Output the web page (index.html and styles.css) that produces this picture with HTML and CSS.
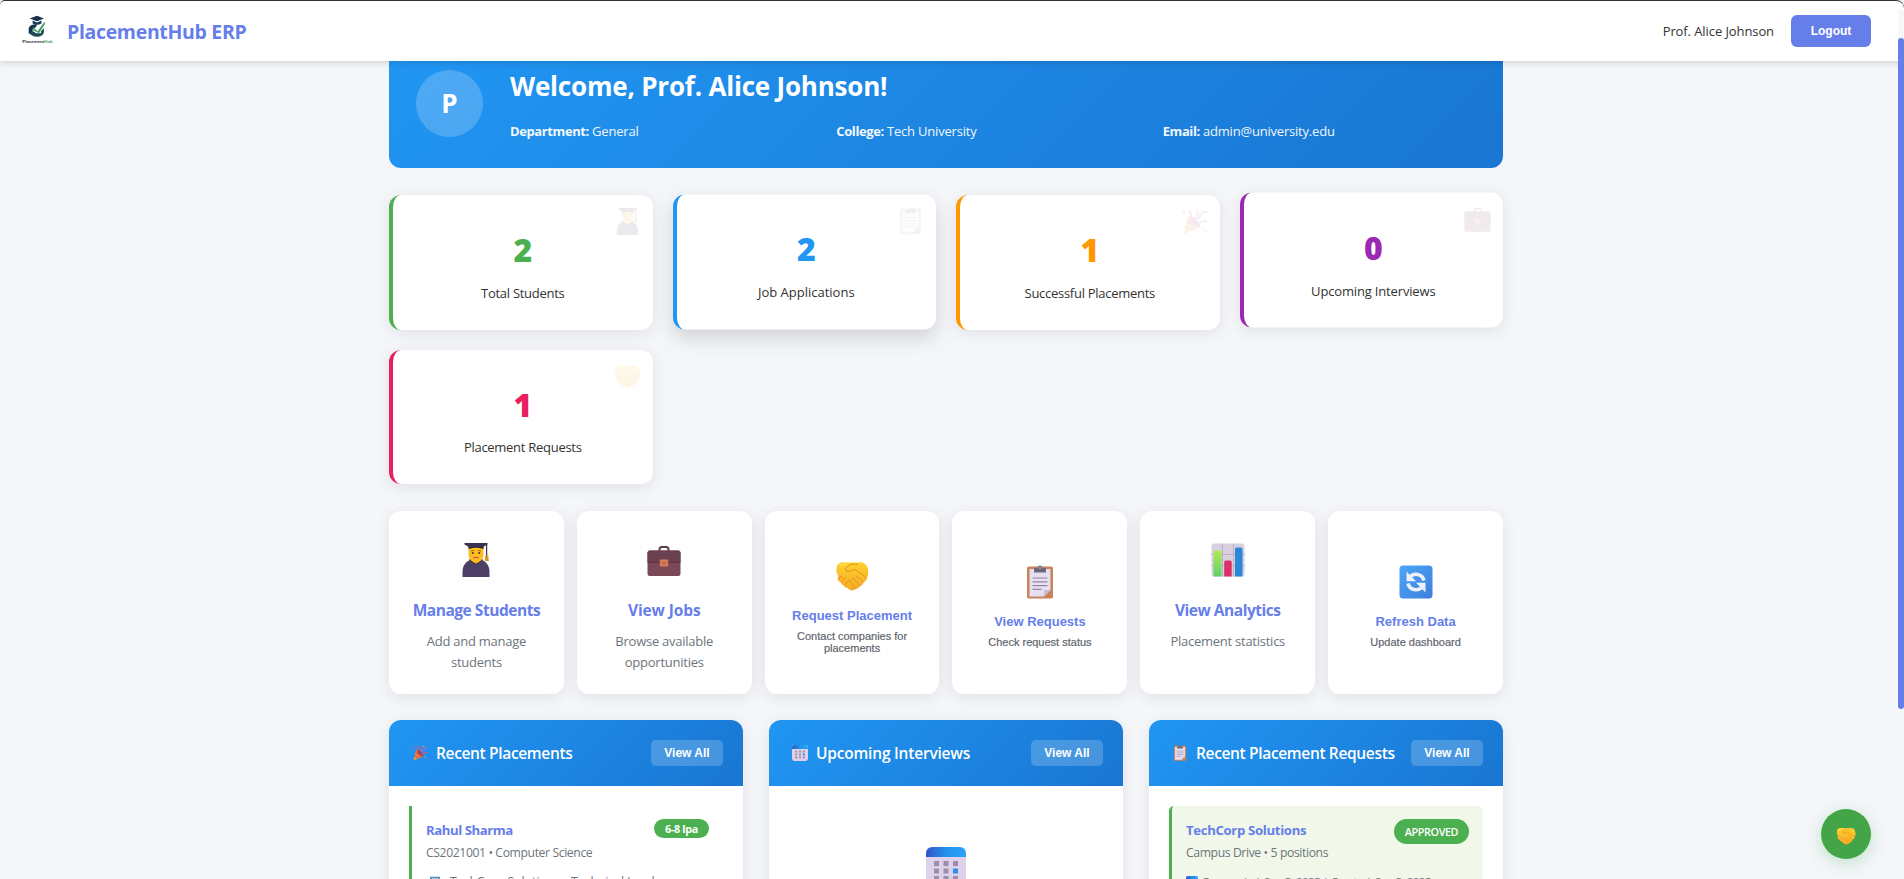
FILE: index.html
```html
<!DOCTYPE html>
<html lang="en">
<head>
<meta charset="utf-8">
<title>PlacementHub ERP</title>
<link rel="stylesheet" href="styles.css">
</head>
<body>
<svg class="defs" aria-hidden="true">
  <defs>
    <linearGradient id="gold" x1="0" y1="0" x2="0" y2="1"><stop offset="0" stop-color="#ffd02e"/><stop offset="1" stop-color="#f7a928"/></linearGradient>
    <linearGradient id="sky" x1="0" y1="0" x2="1" y2="1"><stop offset="0" stop-color="#4aa6f5"/><stop offset="1" stop-color="#3f7fdc"/></linearGradient>
    <linearGradient id="cap" x1="0" y1="0" x2="1" y2="0"><stop offset="0" stop-color="#2f55c8"/><stop offset=".5" stop-color="#2490ee"/><stop offset="1" stop-color="#2aa4fa"/></linearGradient>
    <linearGradient id="lime" x1="0" y1="0" x2="0" y2="1"><stop offset="0" stop-color="#b5ea52"/><stop offset="1" stop-color="#5ccf6a"/></linearGradient>
    <symbol id="grad" viewBox="0 0 34 34">
      <path d="M3.500 34v-5c0-7 4-11 9-12.500h9c5 1.500 9 5.500 9 12.500v5z" fill="#4c3f66"/>
      <path d="M10 17l7 5 7-5-2-2H12z" fill="#2e2740"/>
      <path d="M14 14h6v5l-3 2-3-2z" fill="#e79a1e"/>
      <path d="M9.500 4h15v7c0 5-3.500 8.500-7.500 8.500S9.500 16 9.500 11z" fill="#fbbd20"/>
      <circle cx="13.800" cy="10" r="1" fill="#4b3630"/><circle cx="20.200" cy="10" r="1" fill="#4b3630"/>
      <path d="M12 8l3-.6M22 8l-3-.6" stroke="#8a5a1c" stroke-width=".8"/>
      <path d="M14.500 15q2.500-1.500 5 0" stroke="#c63a50" stroke-width="1.200" fill="none"/>
      <path d="M9.500 2h15v4q-7.500-2.500-15 0z" fill="#2a2438"/>
      <path d="M5.500 0h23v1.500L24 4H10L5.500 1.500z" fill="#3a3250"/>
      <path d="M27.600 1v12" stroke="#3a3250" stroke-width="1.200"/>
      <path d="M26.200 12.500h3l.6 5.500h-4z" fill="#d7962c"/>
    </symbol>
    <symbol id="case" viewBox="0 0 34 34">
      <path d="M12.500 8V6.500Q12.500 4 15 4h4q2.500 0 2.500 2.500V8" fill="none" stroke="#5a3c46" stroke-width="2"/>
      <rect x="0.500" y="7.500" width="33" height="25.500" rx="2.200" fill="#7b4858"/>
      <path d="M.5 19V10q0-2.500 2.500-2.500h28q2.500 0 2.500 2.500v9z" fill="#6c414f"/>
      <path d="M.5 19.200h33" stroke="#54313e"/>
      <rect x="12.800" y="16.500" width="8.400" height="7" rx="1" fill="#d87a5c"/><rect x="14.600" y="18.300" width="4.800" height="3.400" fill="#c96e52"/>
    </symbol>
    <symbol id="shake" viewBox="0 0 34 34">
      <path d="M6 3.500Q9 3 11.500 3.600h11Q26 2.800 29 4q4 3 4.300 8 .2 4-1.300 6.500 0 3-3.500 5-1 3-3.500 3.800-1.500 2.700-4.500 3-2 1.500-5 1-1.500-1-3-2.300-2.500 0-3.500-2.500-2.500-.5-3-3-3.500-1-3.500-4.500.8-1.500.5-3Q.5 12.500 1.500 9C2.200 6 3.500 4 6 3.500z" fill="url(#gold)"/>
      <path d="M23 5.500l-7-.5-5.500 4.500q0 3.500 3.500 3l6-2 9.500 6.500q1.500 2.500 2 1.500" fill="none" stroke="#dc931c" stroke-width="1"/>
      <path d="M20.500 16.500l8 6.500M17.500 18.500l7.500 8M14.500 20.500l5.500 9" stroke="#e2951f" stroke-width="1" fill="none"/>
      <path d="M3.500 20l3.500-3.500M6 23.500l5-5.500M9.500 26.500l4.500-5.500" stroke="#ee9226" stroke-width="1.100"/>
      <path d="M4.500 7Q8 4.700 12 5.500" stroke="#ffe15c" fill="none" stroke-width="1.500"/>
    </symbol>
    <symbol id="clip" viewBox="0 0 34 34">
      <rect x="4" y="1.500" width="26" height="32" rx="1.800" fill="#c9825a"/>
      <path d="M6.500 4h21v21l-6.500 6.500H6.500z" fill="#e6dff0"/>
      <path d="M21 31.500V25h6.500z" fill="#c9bbd6"/>
      <path d="M9.500 13h15M9.500 16.800h15M9.500 20.600h15M9.500 24.400h9" stroke="#9288a2" stroke-width="1.200"/>
      <path d="M11 7.500V4.200q0-1.200 1.500-1.200h2Q15 .5 17 .5T19.500 3h2Q23 3 23 4.200v3.300z" fill="#6c6878"/><circle cx="17" cy="3" r=".9" fill="#b9b3c4"/>
    </symbol>
    <symbol id="chart" viewBox="0 0 34 34">
      <rect x=".5" y=".5" width="33" height="33" rx="3" fill="#d8cfdf"/>
      <path d="M.5 11.500h33M.5 22.500h33M11.500.5v33M22.500.5v33" stroke="#b5a8bf" stroke-width=".8"/>
      <path d="M2.500 9q0-1.500 1.500-1.500h5q1.500 0 1.500 1.500v24.500h-8z" fill="url(#lime)"/>
      <path d="M13.200 19q0-1.500 1.500-1.500h4.500q1.500 0 1.500 1.500v14.500h-7.500z" fill="#dc2f68"/>
      <path d="M24 6q0-1.500 1.500-1.500h4.500q1.500 0 1.500 1.500v27.500H24z" fill="#2b87d8"/>
    </symbol>
    <symbol id="refresh" viewBox="0 0 34 34">
      <rect x=".5" y=".5" width="33" height="33" rx="3.500" fill="url(#sky)"/>
      <path d="M10.500 12.500A8.200 8.200 0 0 1 25 15.500" fill="none" stroke="#eef0fc" stroke-width="3.600"/>
      <path d="M7.500 6.500v9.800h9.500z" fill="#eef0fc"/>
      <path d="M23.500 21.500A8.200 8.200 0 0 1 9 18.500" fill="none" stroke="#eef0fc" stroke-width="3.600"/>
      <path d="M26.500 27.500v-9.800H17z" fill="#eef0fc"/>
    </symbol>
    <symbol id="party" viewBox="0 0 34 34">
      <path d="M3 33L9 10l15 14z" fill="#f09a3c"/>
      <path d="M6 23l9 5M8 16l12 10" stroke="#dd4f55" stroke-width="3"/>
      <ellipse cx="17" cy="17" rx="3.200" ry="9.500" transform="rotate(-46 17 17)" fill="#a0405a"/>
      <path d="M12 13Q14 7 10 2M18 14q5-4 2-11M21 20q5-5 12-3" fill="none" stroke="#e5547b" stroke-width="2.400"/>
      <path d="M19 13q5 1 6-4t8-4" fill="none" stroke="#9566e0" stroke-width="2.400"/>
      <circle cx="4" cy="6" r="1.800" fill="#e5547b"/><circle cx="28" cy="25" r="1.700" fill="#6fb8f2"/><circle cx="25" cy="3" r="1.500" fill="#f3c33b"/><circle cx="31" cy="29" r="1.400" fill="#e5547b"/>
    </symbol>
    <symbol id="cal" viewBox="0 0 40 40">
      <rect width="40" height="40" rx="6" fill="#ded2ea"/>
      <path d="M0 10V7q0-7 7-7h26q7 0 7 7v3z" fill="url(#cap)"/>
      <g fill="#9d8fac"><path d="M8 14h5v5H8zM17.500 14h5v5h-5zM27 14h5v5h-5zM8 21.500h5v5H8zM17.500 21.500h5v5h-5zM8 29h5v5H8zM17.500 29h5v5h-5zM27 29h5v5h-5z"/></g>
      <path d="M27 21.500h5v5h-5z" fill="#2e90ea"/>
    </symbol>
    <symbol id="office" viewBox="0 0 34 34">
      <path d="M3 2h28v31H3z" fill="#5b8fb8"/><path d="M9 6h4v4H9zM15 6h4v4h-4zM21 6h4v4h-4z" fill="#c8e3f7"/>
    </symbol>
  </defs>
</svg>
<header class="topbar">
  <div class="brand">
    <svg class="logo" viewBox="0 0 32 32">
      <g transform="translate(2.100 .6) scale(.87)">
        <path d="M8.500 5L16 2.200 23 5l-7 2.800z" fill="#16304c"/>
        <path d="M11.500 7v3q4.500 2.500 9 0V7L16 9z" fill="#1c3b58"/>
        <path d="M16 10.500Q8 11 7.500 15v5.500h4V16l3.500-2.500z" fill="#14324d"/>
        <path d="M8 19q2 4.500 8 4.500t7-4.500v-4l-3 3v2h-5l-3-2z" fill="#1d4a55"/>
        <path d="M12 13.500l4.500 4.500 7-9.500.8 1.800L18 20l-6-3z" fill="#3fa35f"/>
      </g>
      <text x="16.500" y="26.300" class="logo-text" text-anchor="middle"><tspan fill="#1b2f4a">Placement</tspan><tspan fill="#48a060">Hub</tspan></text>
    </svg>
    <span class="brand-name">PlacementHub ERP</span>
  </div>
  <div class="account"><span class="user">Prof. Alice Johnson</span><button class="logout">Logout</button></div>
</header>
<div class="scrollbar"><div class="thumb"></div></div>
<main class="page">
  <section class="banner">
    <div class="avatar">P</div>
    <div class="intro">
      <h1>Welcome, Prof. Alice Johnson!</h1>
      <div class="facts">
        <div class="fact"><b>Department:</b> General</div>
        <div class="fact"><b>College:</b> Tech University</div>
        <div class="fact"><b>Email:</b> admin@university.edu</div>
      </div>
    </div>
  </section>

  <section class="stats">
    <div class="stat green"><svg class="ghost"><use href="#grad"/></svg><div class="num">2</div><div class="label">Total Students</div></div>
    <div class="stat blue"><svg class="ghost"><use href="#clip"/></svg><div class="num">2</div><div class="label">Job Applications</div></div>
    <div class="stat orange"><svg class="ghost"><use href="#party"/></svg><div class="num">1</div><div class="label">Successful Placements</div></div>
    <div class="stat purple"><svg class="ghost"><use href="#case"/></svg><div class="num">0</div><div class="label">Upcoming Interviews</div></div>
    <div class="stat pink"><svg class="ghost"><use href="#shake"/></svg><div class="num">1</div><div class="label">Placement Requests</div></div>
  </section>

  <section class="actions">
    <a class="action link"><svg class="icon"><use href="#grad"/></svg><h3>Manage Students</h3><p>Add and manage<br>students</p></a>
    <a class="action link jobs"><svg class="icon"><use href="#case"/></svg><h3>View Jobs</h3><p>Browse available<br>opportunities</p></a>
    <button class="action"><svg class="icon"><use href="#shake"/></svg><h3>Request Placement</h3><p>Contact companies for<br>placements</p></button>
    <button class="action"><svg class="icon"><use href="#clip"/></svg><h3>View Requests</h3><p>Check request status</p></button>
    <a class="action link"><svg class="icon"><use href="#chart"/></svg><h3>View Analytics</h3><p>Placement statistics</p></a>
    <button class="action"><svg class="icon"><use href="#refresh"/></svg><h3>Refresh Data</h3><p>Update dashboard</p></button>
  </section>

  <section class="panels">
    <article class="panel">
      <header><h2><svg><use href="#party"/></svg>Recent Placements</h2><button>View All</button></header>
      <div class="body">
        <div class="item">
          <div class="row"><div><h4>Rahul Sharma</h4><p>CS2021001 • Computer Science</p></div><span class="tag">6-8 lpa</span></div>
          <p class="note company"><svg><use href="#office"/></svg><span>TechCorp Solutions • Technical Lead</span></p>
        </div>
      </div>
    </article>
    <article class="panel">
      <header><h2 class="wide"><svg><use href="#cal"/></svg>Upcoming Interviews</h2><button>View All</button></header>
      <div class="body empty"><svg><use href="#cal"/></svg></div>
    </article>
    <article class="panel">
      <header><h2><svg><use href="#clip"/></svg>Recent Placement Requests</h2><button>View All</button></header>
      <div class="body">
        <div class="item approved">
          <div class="row"><div><h4>TechCorp Solutions</h4><p>Campus Drive • 5 positions</p></div><span class="tag">APPROVED</span></div>
          <p class="note"><svg><use href="#cal"/></svg><span>Responded: Sep 5, 2025 | Created: Sep 3, 2025</span></p>
        </div>
      </div>
    </article>
  </section>
</main>
<button class="fab"><svg><use href="#shake"/></svg></button>
</body>
</html>
```
FILE: styles.css
```css
* { box-sizing: border-box; margin: 0; padding: 0; }
html { background: #333; height: 100%; overflow: hidden; }
body { height: 879px; overflow: hidden; font-family: "Open Sans", "Noto Sans", sans-serif; background: #f4f6fa; color: #333; }
button { border: 0; font-family: "Liberation Sans", Arial, sans-serif; }
svg { display: block; }
.defs { position: absolute; width: 0; height: 0; }

.topbar { position: relative; z-index: 5; height: 61px; padding: 0 33px 0 19px; background: #fff; border-top: 1px solid #333; border-radius: 5px 8px 0 0; box-shadow: 0 2px 6px rgba(0,0,0,.14); display: flex; justify-content: space-between; align-items: center; }
.brand { display: flex; align-items: center; gap: 12px; }
.logo { width: 36px; height: 36px; }
.logo-text { font: bold 3.900px "Liberation Sans", sans-serif; }
.brand-name { font-size: 19.500px; letter-spacing: -.33px; font-weight: 700; color: #667eea; }
.account { display: flex; align-items: center; gap: 17px; font-size: 13px; letter-spacing: -.09px; }
.logout { width: 80px; height: 32px; border-radius: 6px; background: #667eea; color: #fff; font-size: 12px; font-weight: 700; }

.scrollbar { position: absolute; z-index: 6; top: 10px; right: 0; width: 6px; height: 869px; background: #f6f7f9; }
.thumb { margin-top: 28px; height: 671px; border-radius: 3px; background: #667eea; }

.page { width: 1114px; margin-left: 389px; }
.banner { height: 130px; margin-top: -23px; padding: 0 27px; display: flex; align-items: center; gap: 27px; color: #fff; background: linear-gradient(135deg, #2196f3, #1976d2); border-radius: 12px; }
.avatar { width: 67px; height: 67px; border-radius: 50%; background: rgba(255,255,255,.2); display: flex; align-items: center; justify-content: center; font-size: 26px; font-weight: 700; }
.intro { flex: 1; padding-top: 3px; }
.intro h1 { font-size: 26px; line-height: 36px; font-weight: 700; letter-spacing: -.2px; }
.facts { display: grid; grid-template-columns: repeat(3, 1fr); gap: 13px; margin-top: 17px; font-size: 13px; line-height: 21px; letter-spacing: -.2px; }
.fact { opacity: .94; }
.fact b { letter-spacing: -.4px; }

.stats { display: grid; grid-template-columns: repeat(4, 1fr); gap: 20px; margin-top: 27px; }
.stat { position: relative; height: 134.500px; background: #fff; border-left: 4px solid; border-radius: 12px; box-shadow: 0 3px 16px rgba(0,0,0,.09); padding-top: 29px; text-align: center; }
.ghost { position: absolute; top: 13px; right: 12px; width: 27px; height: 27px; opacity: .1; }
.num { font-size: 32px; line-height: 51px; font-weight: 800; }
.label { margin-top: 8px; font-size: 13px; line-height: 21px; letter-spacing: -.28px; color: #333; }
.green { color: #4caf50; } .blue { color: #2196f3; } .orange { color: #ff9800; } .purple { color: #9c27b0; } .pink { color: #e91e63; }
.blue { transform: translateY(-.6px); box-shadow: 0 8px 20px rgba(0,0,0,.15); }
.blue .label { letter-spacing: 0; }
.purple { transform: translateY(-2.500px); }
.purple .label { letter-spacing: -.16px; }
.pink .label { margin-top: 7px; }

.actions { display: grid; grid-template-columns: repeat(6, 1fr); gap: 13px; margin-top: 27px; }
.action { height: 183px; padding-top: 7px; border-radius: 12px; background: #fff; box-shadow: 0 3px 16px rgba(0,0,0,.09); display: flex; flex-direction: column; align-items: center; justify-content: center; text-align: center; }
.icon { width: 34px; height: 34px; margin-bottom: 15px; }
.action h3 { font-size: 13px; line-height: 15px; font-weight: 700; color: #667eea; margin-bottom: 7px; }
.action p { font-size: 11px; line-height: 12px; color: #5f666e; -webkit-text-stroke: .2px #5f666e; }
.link { justify-content: flex-start; padding-top: 32px; }
.link .icon { margin-bottom: 20px; }
.link h3 { font-size: 15.500px; line-height: 26px; margin-bottom: 8px; letter-spacing: -.47px; }
.link p { font-size: 13px; line-height: 21px; letter-spacing: -.25px; color: #6c757d; -webkit-text-stroke: 0; }
.jobs h3 { letter-spacing: -.1px; }

.panels { display: grid; grid-template-columns: repeat(3, 1fr); gap: 26px; margin-top: 26px; }
.panel { height: 240px; border-radius: 12px; background: #fff; overflow: hidden; box-shadow: 0 3px 16px rgba(0,0,0,.09); }
.panel header { height: 66px; padding: 0 20px 0 23px; display: flex; align-items: center; justify-content: space-between; background: linear-gradient(135deg, #2196f3, #1976d2); color: #fff; }
.panel h2 { display: flex; align-items: center; gap: 8px; font-size: 15.500px; font-weight: 600; letter-spacing: -.34px; white-space: nowrap; }
.panel .wide { letter-spacing: -.2px; }
.panel h2 svg { width: 16px; height: 16px; }
.panel header button { width: 72px; height: 26px; border-radius: 5px; background: rgba(255,255,255,.2); color: #fff; font-size: 12px; font-weight: 700; }
.body { padding: 20px; }
.item { height: 120px; padding: 13px 14px; border-left: 3px solid #4caf50; }
.row { display: flex; justify-content: space-between; align-items: flex-start; }
.item h4 { font-size: 13.200px; line-height: 22px; letter-spacing: -.45px; font-weight: 700; color: #667eea; }
.approved h4 { letter-spacing: -.35px; }
.item p { margin-top: 1px; font-size: 12.200px; line-height: 21px; letter-spacing: -.39px; color: #6c757d; }
.tag { width: 55px; height: 19px; border-radius: 13px; background: #4caf50; color: #fff; font-size: 10.800px; line-height: 19px; letter-spacing: -.3px; font-weight: 700; text-align: center; }
.approved { background: #f1f8e9; border-radius: 5px; }
.approved .tag { width: 75px; height: 25px; line-height: 25px; letter-spacing: -.4px; font-weight: 600; }
.item .note { display: flex; align-items: center; gap: 5px; margin-top: 8px; font-size: 11.500px; letter-spacing: -.5px; }
.note svg { width: 12px; height: 12px; }
.item .company { gap: 9px; padding-left: 3px; font-size: 12.200px; letter-spacing: 0; }
.empty { display: flex; justify-content: center; padding-top: 61px; }
.empty svg { width: 40px; height: 40px; }

.fab { position: fixed; z-index: 7; left: 1821px; top: 809px; width: 50px; height: 50px; border-radius: 50%; background: #43a547; box-shadow: 0 4px 16px rgba(76,175,80,.3); display: flex; align-items: center; justify-content: center; }
.fab svg { width: 20px; height: 20px; margin-top: 4px; }
```
